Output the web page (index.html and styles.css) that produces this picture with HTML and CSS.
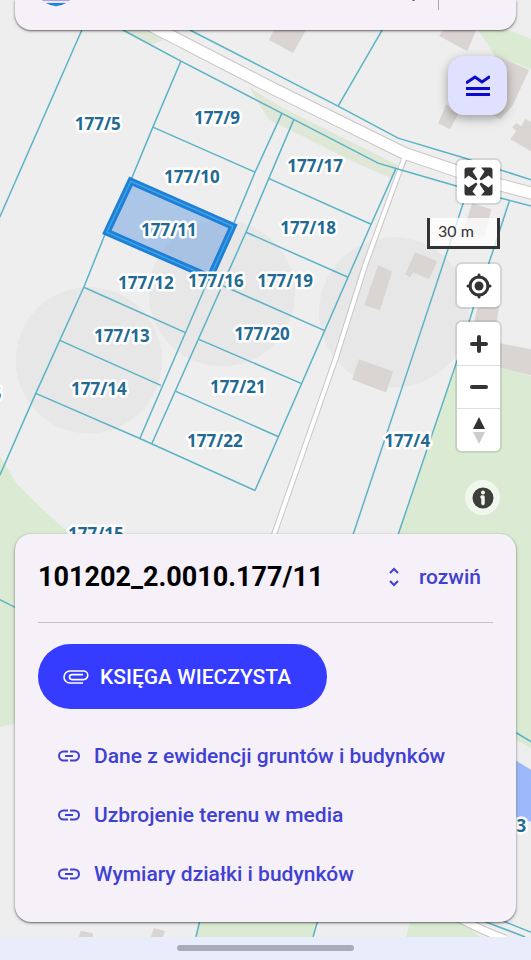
FILE: index.html
```html
<!DOCTYPE html>
<html lang="pl">
<head>
<meta charset="utf-8">
<meta name="viewport" content="width=device-width, initial-scale=1">
<title>Działka 177/11</title>
<link rel="stylesheet" href="styles.css">
</head>
<body>
<div class="screen">
  <svg class="map" viewBox="0 0 531 960" preserveAspectRatio="xMidYMin slice" role="img" aria-label="Mapa działek">
    <g class="green">
      <path d="M478 30H508L531 39V69L494 55Z"/>
      <path d="M458 357L480 358L531 376V748L516 739L398 739V534Z"/>
      <path d="M0 455L17 483Q40 507 63 527L90 545V723H15L0 726Z"/>
      <path d="M199 915H319L313 936H196Z"/>
      <path d="M411 915H455L480 936H406Z"/>
    </g>
    <g class="verge">
      <path d="M123 30H148L164 40L150 45Z"/>
      <path d="M250 88L283 108L398 165L391 178L350 160L268 119Z"/>
    </g>
    <g class="zone">
      <circle cx="89" cy="360" r="73"/>
      <circle cx="222" cy="293" r="73"/>
      <circle cx="394" cy="312" r="75"/>
    </g>
    <g class="building">
      <path d="M274 30H306L293 53L269 40Z"/>
      <path d="M443 30H476L467 51L439 36Z"/>
      <path d="M495 55L529 70L512 106L500 119L450 95Z"/>
      <path d="M446 104L458 114L450 129L438 123Z"/>
      <path d="M510 139L516 131L512 127L516 123L521 126L525 119L534 123V153Z"/>
      <path d="M472 203L491 209L484 237L463 230Z"/>
      <path d="M415 252L437 261L429 279L413 272L410 277L405 274Z"/>
      <path d="M378 265L392 271L380 310L364 305Z"/>
      <path d="M359 359L393 371L386 392L352 379Z"/>
      <path d="M478 305H499L496 325H473Z"/>
      <path d="M495 342L531 349V375L495 366Z"/>
      <path d="M81 930L93 932V936H79Z"/>
      <path d="M154 927L165 930L163 936H151Z"/>
    </g>
    <path class="water" d="M516 760L531 769V821L516 817Z"/>
    <g class="road-case">
      <path class="wide" d="M150 25L270 87L404 153L457 171L501 185L535 194"/>
      <path class="narrow" d="M405 157L399 172L365 265L336 357L274 534"/>
      <path class="narrow" d="M455 915Q480 929 505 938"/>
    </g>
    <g class="road">
      <path class="wide" d="M150 25L270 87L404 153L457 171L501 185L535 194"/>
      <path class="narrow" d="M406 153L399 172L365 265L336 357L274 534"/>
      <path class="narrow" d="M455 915Q480 929 505 938"/>
    </g>
    <g class="border">
      <path d="M82 30L0 217"/>
      <path d="M123 30L181 61L270 107L378 163L402 170L457 186L501 198L535 207"/>
      <path d="M190 30L270 71L338 106L398 138L465 158L501 170L535 181"/>
      <path d="M382 30L338 106"/>
      <path d="M181 61L153 127L131 180L106 232L84 287L36 393L0 475"/>
      <path d="M282 113L255 172L233 225L209 278L140 438"/>
      <path d="M294 119L246 232L152 443"/>
      <path d="M396 168L371 224L255 490"/>
      <path d="M153 127L255 172M84 287L185 332M60 340L161 385M36 393L140 438L255 490"/>
      <path d="M268 178L371 224M246 232L348 277M222 285L324 330M199 339L301 383M176 391L278 436"/>
      <path d="M469 189L463 203L411 360L353 534"/>
      <path d="M509 201L493 250L473 308L458 357L398 534"/>
      <path d="M0 599L16 607M516 732L531 741M201 915L196 936M319 915L313 936M475 917L525 936M495 917L535 933"/>
    </g>
    <path class="selected" d="M131 181L233 226L210 277L107 232Z"/>
    <path class="selected-line" d="M131 181L233 226L210 277L107 232Z"/>
    <g class="label">
      <text x="98" y="130">177/5</text>
      <text x="217" y="124">177/9</text>
      <text x="192" y="183">177/10</text>
      <text x="169" y="236">177/11</text>
      <text x="315" y="172">177/17</text>
      <text x="308" y="234">177/18</text>
      <text x="146" y="289">177/12</text>
      <text x="285" y="287">177/19</text>
      <text x="216" y="287">177/16</text>
      <text x="122" y="342">177/13</text>
      <text x="262" y="340">177/20</text>
      <text x="99" y="395">177/14</text>
      <text x="238" y="393">177/21</text>
      <text x="215" y="447">177/22</text>
      <text x="407" y="447">177/4</text>
      <text x="96" y="539">177/15</text>
      <text x="-3" y="400">5</text>
      <text x="521" y="831">3</text>
    </g>
  </svg>

  <header class="topcard">
    <svg class="avatar" viewBox="0 0 28 7" aria-hidden="true"><path fill="#b8a4cf" d="M0 0H28L27 1H1Z"/><path fill="#e9e4f6" d="M1 1H27L24 3H4Z"/><path fill="#1c86dc" d="M4 3H24Q14 9.500 4 3Z"/></svg>
    <svg class="tail" viewBox="0 0 4 10" aria-hidden="true"><path fill="#55505a" d="M0 0H3L2 1H1Z"/></svg>
    <span class="topline"></span>
  </header>

  <div class="controls">
    <button class="legend" type="button" aria-label="Legenda">
      <svg width="24" height="22" viewBox="0 0 24 22" fill="none" stroke="#0a0acb" stroke-width="3"><path d="M0 8L9 2L16 7L24 1.500M0 13.500H24M0 19.500H24"/></svg>
    </button>
    <button class="ctl full" type="button" aria-label="Pełny ekran">
      <svg width="29" height="29" viewBox="0 0 29 29" fill="#333"><path id="arrow" d="M.500 3Q.500.500 3 .500H12L8.500 4.500L13.500 12L12 13.500L4.500 8.500L.500 12Z"/><use href="#arrow" transform="translate(29 0) scale(-1 1)"/><use href="#arrow" transform="translate(0 29) scale(1 -1)"/><use href="#arrow" transform="translate(29 29) scale(-1 -1)"/></svg>
    </button>
    <div class="scale">30 m</div>
    <button class="ctl" type="button" aria-label="Moja lokalizacja">
      <svg width="26" height="26" viewBox="0 0 26 26"><circle cx="13" cy="13" r="9" fill="none" stroke="#333" stroke-width="3"/><circle cx="13" cy="13" r="4.500" fill="#333"/><path d="M13 2V4M13 22V24M2 13H4M22 13H24" stroke="#333" stroke-width="3" stroke-linecap="round"/></svg>
    </button>
    <div class="group">
      <button type="button" aria-label="Przybliż"><svg width="18" height="18" viewBox="0 0 18 18"><path d="M9 2V16M2 9H16" stroke="#333" stroke-width="4" stroke-linecap="round"/></svg></button>
      <button type="button" aria-label="Oddal"><svg width="18" height="18" viewBox="0 0 18 18"><path d="M2 9H16" stroke="#333" stroke-width="4" stroke-linecap="round"/></svg></button>
      <button type="button" aria-label="Obróć na północ"><svg width="12" height="27" viewBox="0 0 12 27"><path d="M6 0L12 12H0Z" fill="#333"/><path d="M0 15H12L6 27Z" fill="#ccc"/></svg></button>
    </div>
    <button class="info" type="button" aria-label="Informacje">
      <svg width="22" height="22" viewBox="0 0 22 22"><circle cx="11" cy="11" r="10.500" fill="#3c4038"/><circle cx="11" cy="5.500" r="2" fill="#f1f7ed"/><path d="M10 10H11V16.500" fill="none" stroke="#f1f7ed" stroke-width="3.500" stroke-linejoin="round" stroke-linecap="round"/></svg>
    </button>
  </div>

  <main class="sheet">
    <div class="head">
      <h1>101202_2.0010.177/11</h1>
      <button class="expand" type="button">
        <svg width="10" height="20" viewBox="0 0 10 20" fill="none" stroke="#4040d2" stroke-width="2"><path d="M1 6L5 2L9 6M1 14L5 18L9 14"/></svg>
        rozwiń
      </button>
    </div>
    <button class="primary" type="button">
      <svg width="26" height="14" viewBox="0 0 26 14" fill="none" stroke="#fff" stroke-width="1.600"><path d="M20 13H7A6 6 0 0 1 7 1H20.500A4.300 4.300 0 0 1 20.500 9.600H9A2.500 2.500 0 0 1 9 4.600H20"/></svg>
      KSIĘGA WIECZYSTA
    </button>
    <nav class="links">
      <a href="#ewidencja"><svg width="22" height="12" viewBox="0 0 22 12"><use href="#chain"/></svg>Dane z ewidencji gruntów i budynków</a>
      <a href="#media"><svg width="22" height="12" viewBox="0 0 22 12"><use href="#chain"/></svg>Uzbrojenie terenu w media</a>
      <a href="#wymiary"><svg width="22" height="12" viewBox="0 0 22 12"><path id="chain" d="M10 1.500H5.500A4.500 4.500 0 0 0 5.500 10.500H10M12 1.500H16.500A4.500 4.500 0 0 1 16.500 10.500H12M7 6H15" fill="none" stroke="#4040d2" stroke-width="2"/></svg>Wymiary działki i budynków</a>
    </nav>
  </main>
  <footer class="gesture"><span></span></footer>
</div>
</body>
</html>
```
FILE: styles.css
```css
* { box-sizing: border-box; }
body {
  margin: 0;
  font-family: Roboto, "Liberation Sans", sans-serif;
  color: #000;
}
button {
  margin: 0;
  padding: 0;
  border: 0;
  font: inherit;
  cursor: pointer;
}
.screen {
  position: relative;
  min-height: 100vh;
  display: flex;
  flex-direction: column;
  overflow: hidden;
  background: #eee;
}
.map {
  position: absolute;
  inset: 0;
  width: 100%;
  height: 100%;
}
.green { fill: #dbebd3; }
.verge { fill: #dfe7d7; }
.zone { fill: #e7e7e7; }
.building { fill: #dad5d3; }
.water { fill: #9db8fb; }
.road-case, .road { fill: none; stroke: #c9c7c5; }
.road { stroke: #fff; }
.road-case .wide { stroke-width: 13; }
.road .wide { stroke-width: 11; }
.road-case .narrow { stroke-width: 6; }
.road .narrow { stroke-width: 4; }
.road-case .narrow:last-child { stroke-width: 9; }
.road .narrow:last-child { stroke-width: 7; }
.border { fill: none; stroke: #5ab3c6; stroke-width: 1.5; }
.selected { fill: #3f86dd; fill-opacity: .38; stroke: #1d7fd8; stroke-width: 7; }
.selected-line { fill: none; stroke: #3fa3e2; stroke-width: 1.5; }
.label {
  font-family: "Noto Sans", "Open Sans", sans-serif;
  font-size: 17px;
  font-weight: 700;
  fill: #236a92;
  stroke: #fff;
  stroke-width: 5px;
  stroke-linejoin: round;
  paint-order: stroke;
  text-anchor: middle;
}
.topcard, .sheet {
  position: relative;
  margin: 0 15px;
  background: #f6f1f8;
  box-shadow: 0 1px 2px rgba(0, 0, 0, .5), 0 1px 4px rgba(0, 0, 0, .15);
}
.topcard {
  display: flex;
  align-items: flex-start;
  height: 30px;
  padding: 0 77px 0 27px;
  border-radius: 0 0 16px 16px;
}
.avatar { width: 28px; height: 7px; }
.tail { width: 4px; height: 10px; margin-left: auto; margin-right: 22px; }
.topline { width: 1px; height: 10px; background: #aaa6ae; }
.controls {
  position: relative;
  display: flex;
  flex-direction: column;
  align-items: flex-end;
  gap: 15px;
  padding: 26px 31px 19px 0;
}
.controls button {
  display: flex;
  align-items: center;
  justify-content: center;
}
.controls .legend {
  width: 59px;
  height: 59px;
  margin: 0 -7px 30px 0;
  border-radius: 16px;
  background: #e0e0ff;
  box-shadow: 0 3px 8px rgba(0, 0, 0, .25), 0 4px 14px rgba(0, 0, 0, .12);
}
.ctl {
  width: 43px;
  height: 43px;
  border-radius: 5px;
  background: #fff;
  box-shadow: 0 0 0 2px rgba(0, 0, 0, .1);
}
.scale {
  width: 73px;
  height: 31px;
  padding-left: 8px;
  border: 3px solid #333;
  border-top: 0;
  background: rgba(255, 255, 255, .75);
  font: 16px/26px Lato, sans-serif;
  color: #333;
}
.group {
  width: 43px;
  border-radius: 5px;
  overflow: hidden;
  background: #fff;
  box-shadow: 0 0 0 2px rgba(0, 0, 0, .1);
}
.group button { width: 100%; height: 43px; background: #fff; }
.group button + button { border-top: 1px solid #ddd; }
.controls .info {
  width: 35px;
  height: 35px;
  margin-top: 14px;
  border-radius: 50%;
  background: #f1f7ed;
}
.sheet {
  margin-top: auto;
  margin-bottom: 15px;
  padding: 0 23px 19px;
  border-radius: 16px;
}
.head {
  display: flex;
  align-items: center;
  justify-content: space-between;
  height: 89px;
  padding: 0 12px 2px 0;
  border-bottom: 1px solid #c6c1c9;
}
h1 {
  margin: 0;
  font-size: 27px;
  font-weight: 700;
  line-height: 32px;
}
.expand {
  display: flex;
  align-items: center;
  gap: 20px;
  background: none;
  font-size: 21px;
  font-weight: 500;
  line-height: 24px;
  color: #4040d2;
}
.primary {
  display: flex;
  align-items: center;
  gap: 11px;
  height: 65px;
  margin: 21px 0 17px;
  padding: 0 36px 0 25px;
  border-radius: 33px;
  background: #353bff;
  font-size: 21px;
  font-weight: 500;
  color: #fff;
}
.links { display: flex; flex-direction: column; }
.links a {
  display: flex;
  align-items: center;
  gap: 14px;
  height: 59px;
  padding-left: 20px;
  font-size: 21px;
  font-weight: 500;
  color: #4040d2;
  text-decoration: none;
}
.gesture {
  position: relative;
  display: flex;
  align-items: center;
  justify-content: center;
  height: 24px;
  padding-bottom: 2px;
  background: #e9ecfa;
}
.gesture span {
  width: 33.333%;
  height: 6px;
  border-radius: 3px;
  background: #aaabb9;
}
```
